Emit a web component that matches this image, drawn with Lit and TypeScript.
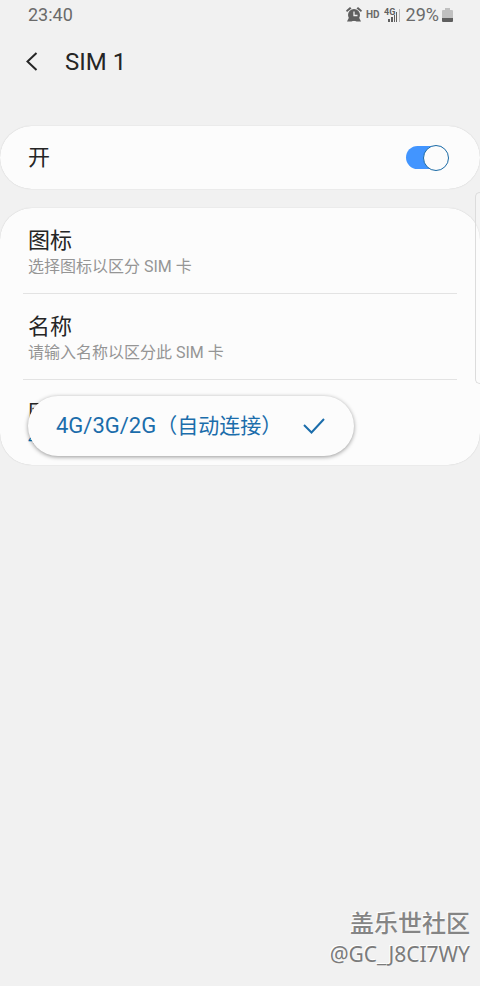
import { LitElement, html, css } from "lit";
import { customElement, state } from "lit/decorators.js";

@customElement("app-root")
export class AppRoot extends LitElement {
  @state() private enabled = true;

  private items = [
    { title: "图标", note: "选择图标以区分 SIM 卡" },
    { title: "名称", note: "请输入名称以区分此 SIM 卡" },
  ];

  static styles = css`
    :host {
      display: flex;
      flex-direction: column;
      box-sizing: border-box;
      position: relative;
      min-height: 100vh;
      background: #f1f1f1;
      color: #252525;
      font-family: Roboto, "Noto Sans CJK SC", sans-serif;
    }
    svg {
      display: block;
      flex: none;
    }
    button {
      border: 0;
      padding: 0;
      margin: 0;
      background: none;
      color: inherit;
      font: inherit;
      text-align: left;
      cursor: pointer;
    }
    .status {
      display: flex;
      justify-content: space-between;
      align-items: center;
      height: 30px;
      padding: 0 27px 0 28px;
      color: #6a6a6a;
      font-size: 18px;
      line-height: 20px;
    }
    .indicators {
      display: flex;
      align-items: center;
      gap: 4px;
    }
    .hd {
      font-size: 10px;
      font-weight: 700;
      line-height: 12px;
    }
    .battery {
      display: flex;
      align-items: center;
      gap: 3px;
    }
    .header {
      display: flex;
      align-items: center;
      gap: 17px;
      height: 64px;
      padding: 0 16px;
    }
    .back {
      width: 32px;
      height: 32px;
    }
    h1 {
      margin: 0;
      font-size: 24px;
      font-weight: 400;
      line-height: 32px;
    }
    .card {
      background: #fcfcfc;
      border-radius: 32px;
      box-shadow: 0 0 1px #bbb;
    }
    .master {
      display: flex;
      align-items: center;
      justify-content: space-between;
      height: 63px;
      margin-top: 32px;
      padding: 0 31px 0 28px;
      font-size: 22px;
      line-height: 28px;
    }
    .switch {
      appearance: none;
      display: flex;
      align-items: center;
      width: 43px;
      height: 23px;
      margin: 0;
      border-radius: 12px;
      background: #bbb;
      cursor: pointer;
    }
    .switch::before {
      content: "";
      box-sizing: border-box;
      flex: none;
      width: 26px;
      height: 26px;
      border: 1px solid #888;
      border-radius: 50%;
      background: #fcfcfc;
    }
    .switch:checked {
      justify-content: flex-end;
      background: linear-gradient(90deg, #4295ff 36px, transparent 36px);
    }
    .switch:checked::before {
      border-color: #1a6aa5;
    }
    .list {
      margin-top: 19px;
      padding: 0 23px;
    }
    .row {
      position: relative;
      padding-left: 5px;
    }
    .row + .row {
      border-top: 1px solid #e3e3e3;
    }
    .entry {
      display: block;
      width: 100%;
      padding: 19px 0 14px;
    }
    .title {
      display: block;
      font-size: 22px;
      line-height: 28px;
    }
    .note {
      display: block;
      color: #959595;
      font-size: 16px;
      line-height: 24px;
    }
    .value {
      color: #0072b4;
    }
    .option {
      position: absolute;
      top: 16px;
      left: 5px;
      display: flex;
      align-items: center;
      gap: 20px;
      height: 60px;
      padding: 0 28px;
      border-radius: 30px;
      background: #fcfcfc;
      box-shadow: 0 1px 4px rgba(0, 0, 0, 0.4);
      color: #1b6dab;
      font-size: 22px;
      line-height: 28px;
      white-space: nowrap;
    }
    .mode {
      font-size: 21px;
    }
    .edge {
      position: absolute;
      top: 192px;
      right: 0;
      box-sizing: border-box;
      width: 5px;
      height: 192px;
      border: 1px solid #dcdcdc;
      border-right: 0;
      border-radius: 5px 0 0 5px;
      background: rgba(252, 252, 252, 0.3);
    }
    .credit {
      margin-top: auto;
      padding: 0 10px 18px;
      color: #7b7b7b;
      text-align: right;
      text-shadow: -1px -1px #fff;
    }
    .community {
      color: #858585;
      font-size: 24px;
      font-weight: 500;
      line-height: 32px;
    }
    .author {
      font-family: "Noto Sans", sans-serif;
      font-size: 21px;
      line-height: 28px;
    }
  `;

  render() {
    return html`
      <div class="status">
        <span>23:40</span>
        <div class="indicators">
          <svg width="16" height="16" viewBox="0 0 16 16" fill="#5f5f5f">
            <path d="M1 5L0 3.500L4 0L5.500 1.500zM15 5L16 3.500L12 0L10.500 1.500z" />
            <circle cx="8" cy="8" r="6" />
            <path d="M3 10.500L1 14.500H5.500L8 13.500L10.500 14.500H15L13 10.500z" />
            <path d="M8 4.500V8.500H11.500" fill="none" stroke="#f1f1f1" stroke-width="1.300" />
          </svg>
          <span class="hd">HD</span>
          <svg width="18" height="16" viewBox="0 0 18 16" fill="#5f5f5f">
            <text x="0" y="8" font-size="9" font-weight="700">4G</text>
            <path d="M4 12h2v3H4zM7 10h2v5H7zM10 8h1v7h-1zM12 5h1v10h-1z" />
            <path d="M15 2h1v13h-1z" fill="#b8b8b8" />
          </svg>
          <span class="battery">
            29%
            <svg width="11" height="14" viewBox="0 0 11 14">
              <path d="M3 0h5v2h2q1 0 1 1v7H0V3q0-1 1-1h2z" fill="#c0c0c0" />
              <path d="M0 10h11v3q0 1-1 1H1q-1 0-1-1z" fill="#5f5f5f" />
            </svg>
          </span>
        </div>
      </div>
      <header class="header">
        <button class="back" aria-label="返回">
          <svg width="32" height="32" viewBox="0 0 32 32" fill="none" stroke="#252525" stroke-width="2">
            <path d="M20.500 7L11.500 15.500L20.500 24" />
          </svg>
        </button>
        <h1>SIM 1</h1>
      </header>
      <label class="card master">
        开
        <input
          class="switch"
          type="checkbox"
          role="switch"
          .checked=${this.enabled}
          @change=${(e: Event) => (this.enabled = (e.target as HTMLInputElement).checked)}
        />
      </label>
      <section class="card list">
        ${this.items.map(
          (item) => html`
            <div class="row">
              <button class="entry">
                <span class="title">${item.title}</span>
                <span class="note">${item.note}</span>
              </button>
            </div>
          `
        )}
        <div class="row">
          <button class="entry">
            <span class="title">网络模式</span>
            <span class="note value">4G/3G/2G（自动连接）</span>
          </button>
          <button class="option">
            <span>4G/3G/2G<span class="mode">（自动连接）</span></span>
            <svg width="24" height="20" viewBox="0 0 24 20" fill="none" stroke="#1b6dab" stroke-width="2">
              <path d="M2 9L9.500 16.500L22 3" />
            </svg>
          </button>
        </div>
      </section>
      <div class="edge"></div>
      <footer class="credit">
        <div class="community">盖乐世社区</div>
        <div class="author">@GC_J8CI7WY</div>
      </footer>
    `;
  }
}
